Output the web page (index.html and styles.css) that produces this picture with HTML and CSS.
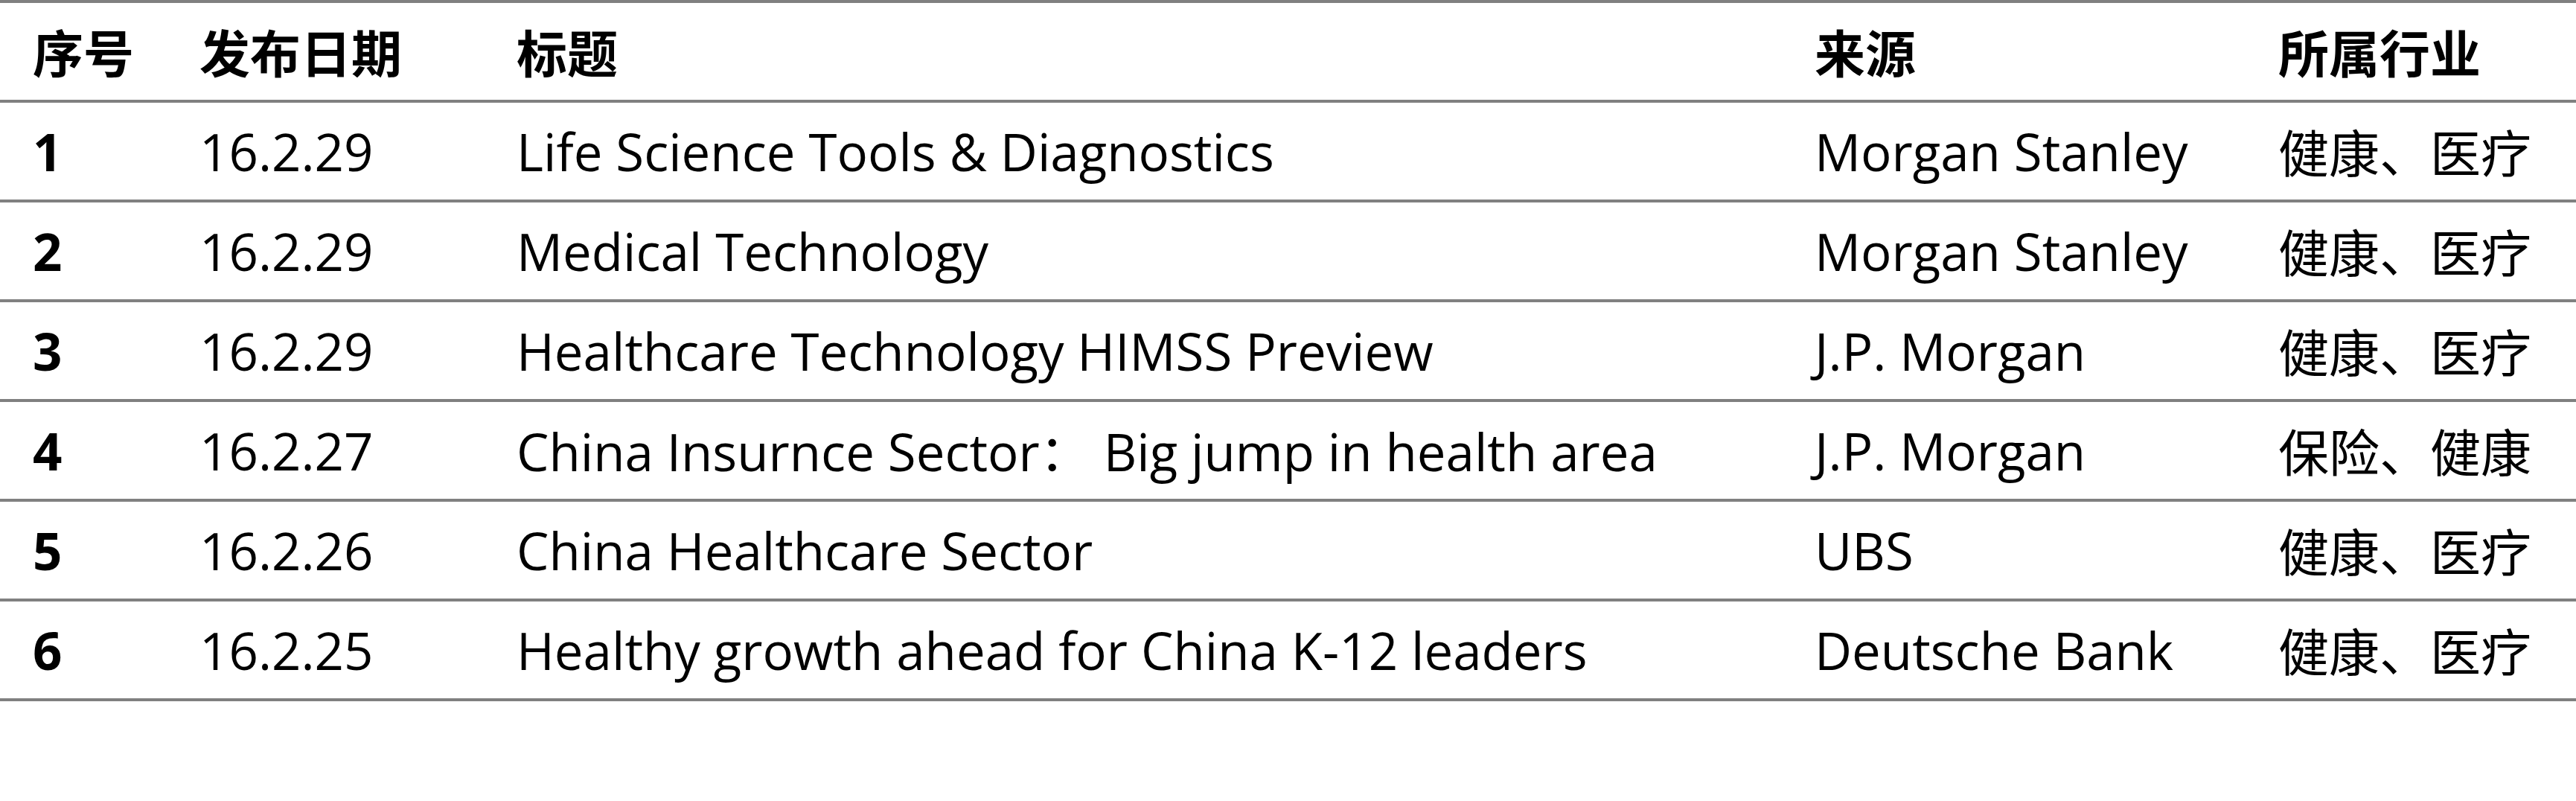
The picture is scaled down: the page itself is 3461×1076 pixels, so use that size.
FILE: index.html
```html
<!DOCTYPE html>
<html lang="zh-CN">
<head>
<meta charset="utf-8">
<title>研报列表</title>
<link rel="stylesheet" href="styles.css">
</head>
<body>
<div class="table">
  <div class="row head">
    <div class="cell cjk">序号</div>
    <div class="cell cjk">发布日期</div>
    <div class="cell cjk">标题</div>
    <div class="cell cjk">来源</div>
    <div class="cell cjk">所属行业</div>
  </div>
  <div class="row">
    <div class="cell num">1</div>
    <div class="cell">16.2.29</div>
    <div class="cell">Life Science Tools &amp; Diagnostics</div>
    <div class="cell">Morgan Stanley</div>
    <div class="cell cjk">健康、医疗</div>
  </div>
  <div class="row">
    <div class="cell num">2</div>
    <div class="cell">16.2.29</div>
    <div class="cell">Medical Technology</div>
    <div class="cell">Morgan Stanley</div>
    <div class="cell cjk">健康、医疗</div>
  </div>
  <div class="row">
    <div class="cell num">3</div>
    <div class="cell">16.2.29</div>
    <div class="cell">Healthcare Technology HIMSS Preview</div>
    <div class="cell">J.P. Morgan</div>
    <div class="cell cjk">健康、医疗</div>
  </div>
  <div class="row">
    <div class="cell num">4</div>
    <div class="cell">16.2.27</div>
    <div class="cell">China Insurnce Sector<span class="cjk-inline">：</span> Big jump in health area</div>
    <div class="cell">J.P. Morgan</div>
    <div class="cell cjk">保险、健康</div>
  </div>
  <div class="row">
    <div class="cell num">5</div>
    <div class="cell">16.2.26</div>
    <div class="cell">China Healthcare Sector</div>
    <div class="cell">UBS</div>
    <div class="cell cjk">健康、医疗</div>
  </div>
  <div class="row">
    <div class="cell num">6</div>
    <div class="cell">16.2.25</div>
    <div class="cell">Healthy growth ahead for China K-12 leaders</div>
    <div class="cell">Deutsche Bank</div>
    <div class="cell cjk">健康、医疗</div>
  </div>
</div>
</body>
</html>
```

FILE: styles.css
```css
html, body {
  margin: 0;
  padding: 0;
  background: #ffffff;
}

body {
  font-family: "Open Sans", "Noto Sans CJK SC", sans-serif;
  color: #000000;
}

.table {
  width: 100%;
  border-top: 4px solid #808080;
}

.row {
  display: grid;
  grid-template-columns: 224px 426px 1744px 623px 1fr;
  padding-left: 44px;
  height: 130px;
  align-items: center;
  border-bottom: 4px solid #808080;
}

.cell {
  font-size: 69px;
  line-height: 1;
  white-space: nowrap;
}

.cjk {
  font-family: "Noto Sans CJK SC", sans-serif;
  font-size: 68px;
}

.cjk-inline {
  font-family: "Noto Sans CJK SC", sans-serif;
  font-size: 68px;
}

.head .cell {
  font-weight: 700;
}

.num {
  font-weight: 700;
}
```
